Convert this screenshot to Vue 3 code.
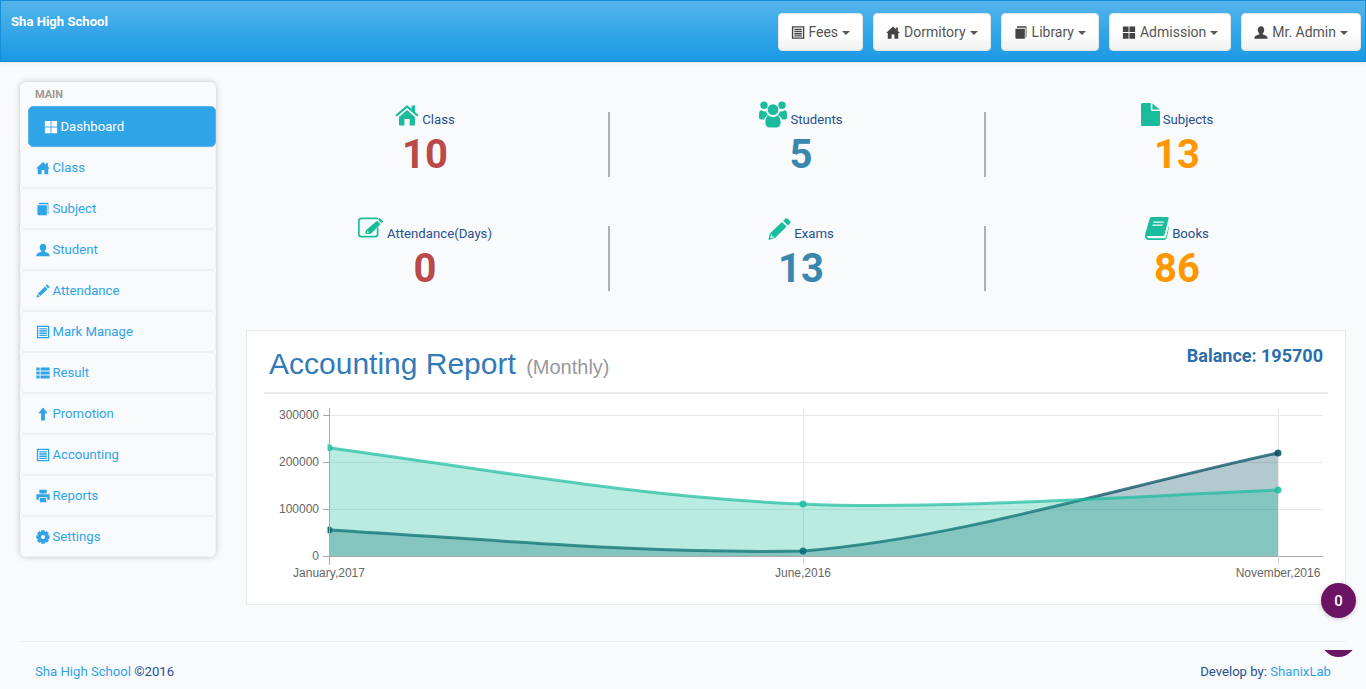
<script setup>
const paths = {
  th: 'M1 1H7.5V7.5H1Z M8.5 1H15V7.5H8.5Z M1 8.5H7.5V15H1Z M8.5 8.5H15V15H8.5Z',
  home: 'M8 1.2 L11.6 4.4 V2.2 H13.6 V6.2 L16 8.5 H14 V15 H9.6 V10.4 H6.4 V15 H2 V8.5 H0Z',
  book: 'M1.6 3.6 H12.4 V15.2 H3.2 Q1.6 15.2 1.6 13.6Z M3.4 0.8 H14.2 V13.6 H13.3 V2.7 H3.4Z',
  user: 'M8 0.8 C10.6 0.8 11.7 3 11.7 5 C11.7 7 10.6 8.5 9.9 9.2 V10 C11.2 10.8 15.6 11 15.6 15 H0.4 C0.4 11 4.8 10.8 6.1 10 V9.2 C5.4 8.5 4.3 7 4.3 5 C4.3 3 5.4 0.8 8 0.8Z',
  pencil: 'M12.7 0.4 L15.6 3.3 L13.9 5 L11 2.1Z M10.3 2.8 L13.2 5.7 L5.1 13.8 L2.2 10.9Z M1.6 11.6 L4.4 14.4 L0.4 15.6Z',
  list: 'M1 0.8H15.2V15.2H1Z M2.6 2.4V13.6H13.6V2.4Z M3.8 3.6H12.4V5.2H3.8Z M3.8 6.1H12.4V7.7H3.8Z M3.8 8.6H12.4V10.2H3.8Z M3.8 11.1H12.4V12.5H3.8Z',
  rows: 'M0.4 1.8H4.2V5.2H0.4Z M5.2 1.8H15.6V5.2H5.2Z M0.4 6.3H4.2V9.7H0.4Z M5.2 6.3H15.6V9.7H5.2Z M0.4 10.8H4.2V14.2H0.4Z M5.2 10.8H15.6V14.2H5.2Z',
  up: 'M8 0.6 L13.4 7 H10.2 V15.4 H5.8 V7 H2.6Z',
  print: 'M3.8 0.8H12.2V5.2H3.8Z M0.4 6H15.6V12.4H12.8V9.4H3.2V12.4H0.4Z M4.4 10.4H11.6V15.2H4.4Z',
  cog: gear()
}

function gear() {
  let d = ''
  const teeth = 8
  for (let i = 0; i < teeth; i++) {
    const a = (i / teeth) * Math.PI * 2
    const pts = [[-0.42, 5.6], [-0.26, 7.9], [0.26, 7.9], [0.42, 5.6]]
    const q = pts.map(([s, r]) => `${(8 + r * Math.cos(a + s)).toFixed(2)} ${(8 + r * Math.sin(a + s)).toFixed(2)}`)
    d += (i ? 'L' : 'M') + q.join('L')
  }
  d += 'Z M8 5.6 A2.4 2.4 0 1 0 8 10.4 A2.4 2.4 0 1 0 8 5.6Z'
  return d
}

const bigIcons = {
  home: { box: '0 0 24 22', d: 'M0.4 11 L12 1 L16.6 5 V1.6 H20 V8 L23.6 11 L22.2 12.6 L12 3.9 L1.8 12.6Z M4 13 L12 6.1 L20 13 V20.5 A1 1 0 0 1 19 21.5 H14.6 V15 H9.4 V21.5 H5 A1 1 0 0 1 4 20.5Z' },
  users: { box: '0 0 28 27', d: 'M5 0.6 A3.7 3.7 0 1 1 5 8 A3.7 3.7 0 1 1 5 0.6Z M23 0.6 A3.7 3.7 0 1 1 23 8 A3.7 3.7 0 1 1 23 0.6Z M14 3.2 A5.4 5.4 0 1 1 14 14 A5.4 5.4 0 1 1 14 3.2Z M0 13 C0 10.5 1 9.2 2.5 9.2 C4 10.4 5.5 10.6 7.2 10.2 C7.6 12 8.2 13.2 9.2 14.2 C7 15 5.6 16.4 5 18.5 H2 C0.8 18.5 0 17.8 0 16.5Z M28 13 C28 10.5 27 9.2 25.5 9.2 C24 10.4 22.5 10.6 20.8 10.2 C20.4 12 19.8 13.2 18.8 14.2 C21 15 22.4 16.4 23 18.5 H26 C27.2 18.5 28 17.8 28 16.5Z M6.4 21.5 C6.4 17.6 7.6 14.8 9.8 14.4 C11 15.6 12.4 16 14 16 C15.6 16 17 15.6 18.2 14.4 C20.4 14.8 21.6 17.6 21.6 21.5 C21.6 24.8 19.8 26.6 17.6 26.6 H10.4 C8.2 26.6 6.4 24.8 6.4 21.5Z' },
  file: { box: '0 0 19 23', d: 'M0 1.5 A1.5 1.5 0 0 1 1.5 0 H9.8 V6.6 A1.4 1.4 0 0 0 11.2 8 H19 V21.5 A1.5 1.5 0 0 1 17.5 23 H1.5 A1.5 1.5 0 0 1 0 21.5Z M11.4 0.4 L18.8 6.6 H11.4Z' },
  edit: { box: '0 0 26 21', d: 'M3.5 0.5 H20 V2.2 H3.5 A1.8 1.8 0 0 0 1.7 4 V17 A1.8 1.8 0 0 0 3.5 18.8 H17 A1.8 1.8 0 0 0 18.8 17 V11.5 L20.5 9.8 V17 A3.5 3.5 0 0 1 17 20.5 H3.5 A3.5 3.5 0 0 1 0 17 V4 A3.5 3.5 0 0 1 3.5 0.5Z M21.8 1 L25.4 4.4 L23.6 6.3 L20 2.8Z M19 3.8 L22.6 7.3 L12.6 17 L7.6 17 L7.6 13.6Z M9.4 13.6 L8.8 15.8 L11 15.6Z' },
  pen: { box: '0 0 23 22', d: 'M17.8 0.3 Q18.6 0 19.4 0.6 L22.2 3.3 Q23 4.2 22.3 5 L19.8 7.4 L15.2 2.8Z M14 3.9 L18.6 8.5 L7 20 L0.4 22 L1.8 15.6Z M3.2 16.2 L2.4 19.4 L3.2 20 L6 19.4 L5.8 18.6 L4 18.6 L4 16.8Z' },
  book: { box: '0 0 24 23', d: 'M6.6 0 H22.6 Q24 0 23.6 1.6 L19.6 17.5 Q19 19 17.6 19 H3.4 Q1.7 19 2.2 20.3 Q2.8 21.3 4 21.3 H19.4 Q20.6 21.3 21 20 L24 8.5 V10.5 L21.8 20.5 Q21 23 18.8 23 H3.4 Q0.8 23 0.2 20 Q-0.2 18.5 0.4 16.5 L4.6 1.8 Q5 0 6.6 0Z M8.6 4.4 L8.2 5.8 H18.4 L18.8 4.4Z M7.6 7.4 L7.2 8.8 H17.4 L17.8 7.4Z' }
}

const navs = [
  { icon: 'list', label: 'Fees' },
  { icon: 'home', label: 'Dormitory' },
  { icon: 'book', label: 'Library' },
  { icon: 'th', label: 'Admission' },
  { icon: 'user', label: 'Mr. Admin' }
]

const menu = [
  { icon: 'home', label: 'Class' },
  { icon: 'book', label: 'Subject' },
  { icon: 'user', label: 'Student' },
  { icon: 'pencil', label: 'Attendance' },
  { icon: 'list', label: 'Mark Manage' },
  { icon: 'rows', label: 'Result' },
  { icon: 'up', label: 'Promotion' },
  { icon: 'list', label: 'Accounting' },
  { icon: 'print', label: 'Reports' },
  { icon: 'cog', label: 'Settings' }
]

const stats = [
  { icon: 'home', label: 'Class', value: '10', tone: 'red' },
  { icon: 'users', label: 'Students', value: '5', tone: 'blue' },
  { icon: 'file', label: 'Subjects', value: '13', tone: 'orange' },
  { icon: 'edit', label: 'Attendance(Days)', value: '0', tone: 'red' },
  { icon: 'pen', label: 'Exams', value: '13', tone: 'blue' },
  { icon: 'book', label: 'Books', value: '86', tone: 'orange' }
]

const yOf = (v) => 556 - (v / 300000) * 141

const series = [
  {
    cls: 'expense',
    line: 'M329 530C487 539 640 554 803 551C961 538 1120 487 1278 453',
    dots: [{ x: 329, y: 530 }, { x: 803, y: 551 }, { x: 1278, y: 453 }]
  },
  {
    cls: 'income',
    line: 'M329 447.7C487 469.3 640 497.5 803 504C930 510 1120 497 1278 490',
    dots: [{ x: 329, y: 447.7 }, { x: 803, y: 504 }, { x: 1278, y: 490 }]
  }
].map((s) => ({ ...s, area: `${s.line}L1278 556L329 556Z` }))

const yTicks = [0, 100000, 200000, 300000].map((v) => ({ v, y: yOf(v) }))
const xTicks = [
  { x: 329, label: 'January,2017' },
  { x: 803, label: 'June,2016' },
  { x: 1278, label: 'November,2016' }
]
</script>

<template>
  <div class="page">
    <header class="topbar">
      <div class="brand">Sha High School</div>
      <nav class="nav">
        <button v-for="n in navs" :key="n.label" class="nav-btn" type="button">
          <svg class="nav-ic" viewBox="0 0 16 16"><path fill-rule="evenodd" :d="paths[n.icon]" /></svg>
          <span>{{ n.label }}</span>
          <i class="caret"></i>
        </button>
      </nav>
    </header>

    <main class="main">
      <aside class="sidebar">
        <div class="side-title">MAIN</div>
        <a class="side-item active">
          <svg class="side-ic" viewBox="0 0 16 16"><path :d="paths.th" /></svg>
          <span>Dashboard</span>
        </a>
        <a v-for="m in menu" :key="m.label" class="side-item">
          <svg class="side-ic" viewBox="0 0 16 16"><path fill-rule="evenodd" :d="paths[m.icon]" /></svg>
          <span>{{ m.label }}</span>
        </a>
      </aside>

      <section class="content">
        <div class="stats">
          <div v-for="(s, i) in stats" :key="s.label" class="stat" :class="{ 'has-rule': i % 3 !== 2 }">
            <div class="stat-head">
              <svg class="stat-ic" :class="'ic-' + s.icon" :viewBox="bigIcons[s.icon].box">
                <path fill-rule="evenodd" :d="bigIcons[s.icon].d" />
              </svg>
              <span class="stat-label">{{ s.label }}</span>
            </div>
            <div class="stat-value" :class="s.tone">{{ s.value }}</div>
          </div>
        </div>

        <div class="card">
          <div class="card-head">
            <h2 class="card-title">Accounting Report <small>(Monthly)</small></h2>
            <div class="balance">Balance: 195700</div>
          </div>
          <svg class="chart" viewBox="247 394 1098 210">
            <defs>
              <clipPath id="plot"><rect x="327.5" y="400" width="960" height="157" /></clipPath>
            </defs>
            <line v-for="t in yTicks.slice(1)" :key="t.v" class="grid" x1="329" x2="1323" :y1="t.y + 0.5" :y2="t.y + 0.5" />
            <line v-for="t in xTicks.slice(1)" :key="t.x" class="grid" :x1="t.x + 0.5" :x2="t.x + 0.5" y1="408" y2="556" />
            <g clip-path="url(#plot)">
              <g v-for="s in series" :key="s.cls" :class="s.cls">
                <path class="area" :d="s.area" />
                <path class="line" :d="s.line" />
                <circle v-for="d in s.dots" :key="d.x" class="dot" :cx="d.x" :cy="d.y" r="3.5" />
              </g>
            </g>
            <line class="axis" x1="329" x2="1323" y1="556.5" y2="556.5" />
            <line class="axis" x1="329.5" x2="329.5" y1="408" y2="565" />
            <line v-for="t in yTicks" :key="'t' + t.v" class="axis" x1="323" x2="329" :y1="t.y + 0.5" :y2="t.y + 0.5" />
            <line v-for="t in xTicks.slice(1)" :key="'x' + t.x" class="axis-soft" :x1="t.x + 0.5" :x2="t.x + 0.5" y1="556" y2="565" />
            <text v-for="t in yTicks" :key="'l' + t.v" class="tick" x="319" :y="t.y + 4" text-anchor="end">{{ t.v }}</text>
            <text v-for="t in xTicks" :key="'b' + t.x" class="tick" :x="t.x" y="577" text-anchor="middle">{{ t.label }}</text>
          </svg>
        </div>
      </section>
    </main>

    <footer class="footer">
      <div><a>Sha High School</a> ©2016</div>
      <div>Develop by: <a>ShanixLab</a></div>
    </footer>

    <div class="badge">0</div>
    <div class="badge-clip"><div class="badge-under"></div></div>
  </div>
</template>

<style>
html, body { margin: 0; background: #f9fafc; }
</style>

<style scoped>
.page {
  position: relative;
  width: 1366px;
  height: 689px;
  overflow: hidden;
  background: #f9fafc;
  font-family: Roboto, "Liberation Sans", sans-serif;
  font-size: 13px;
  color: #26508f;
  display: flex;
  flex-direction: column;
}
.topbar {
  height: 62px;
  box-sizing: border-box;
  border: 1px solid #1a8fd9;
  border-bottom-color: #178ad2;
  background: linear-gradient(#54b4eb, #2fa4e7 60%, #1b98e5);
  box-shadow: 0 1px 6px rgba(0, 0, 0, 0.08);
  display: flex;
  justify-content: space-between;
  flex: none;
  z-index: 1;
}
.brand {
  padding: 13px 0 0 10px;
  font-weight: 700;
  font-size: 13.1px;
  line-height: 16px;
  color: #fff;
}
.nav {
  display: flex;
  gap: 10px;
  padding: 12px 4px 0 0;
}
.nav-btn {
  height: 38px;
  box-sizing: border-box;
  padding: 0 12px;
  display: flex;
  align-items: center;
  border: 1px solid #e4e7ea;
  border-radius: 4px;
  background: linear-gradient(#fff, #fff 55%, #f0f0f0);
  font-family: inherit;
  font-size: 14px;
  color: #555;
}
.nav-btn:first-child { padding-left: 11px; }
.nav-btn:first-child .nav-ic { margin: 0 3px 0 1px; }
.nav-ic {
  width: 14px;
  height: 15px;
  margin-right: 4px;
  fill: #444;
}
.caret {
  margin-left: 4px;
  margin-top: 1px;
  border-top: 4px solid #555;
  border-left: 4px solid transparent;
  border-right: 4px solid transparent;
}
.main {
  flex: 1;
  display: flex;
  align-items: flex-start;
  min-height: 0;
}
.sidebar {
  width: 196px;
  margin: 20px 0 0 20px;
  border-radius: 6px;
  box-shadow: 0 0 6px rgba(0, 0, 0, 0.22);
  flex: none;
}
.side-title {
  height: 24px;
  box-sizing: border-box;
  padding: 6px 0 0 15px;
  font-size: 11px;
  line-height: 14px;
  font-weight: 700;
  color: #a09a94;
}
.side-item {
  height: 41px;
  box-sizing: border-box;
  display: flex;
  align-items: center;
  padding-left: 15px;
  border: 1px solid #eef0f3;
  border-radius: 5px;
  color: #2fa4e7;
  font-size: 13.15px;
}
.side-ic {
  width: 14px;
  height: 14px;
  margin-right: 2.5px;
  fill: #2fa4e7;
}
.side-item.active {
  margin-left: 8px;
  background: #2fa4e7;
  border-color: #5bb5ea;
  color: #fff;
}
.active .side-ic { fill: #fff; }
.content {
  width: 1100px;
  margin-left: 30px;
  flex: none;
}
.stats {
  margin: 37px 0 0 -13px;
  display: grid;
  grid-template-columns: repeat(3, 376px);
}
.stat {
  position: relative;
  height: 114px;
  padding-left: 8px;
  box-sizing: border-box;
  display: flex;
  flex-direction: column;
  align-items: center;
}
.has-rule::after {
  content: "";
  position: absolute;
  right: -1px;
  top: 13px;
  width: 2px;
  height: 65px;
  background: #aab2b4;
}
.stat-head {
  height: 31px;
  display: flex;
  align-items: flex-end;
}
.stat-ic { fill: #1abc9c; margin-right: 3px; }
.ic-home { width: 24px; height: 22px; margin-bottom: 4px; }
.ic-users { width: 28px; height: 27px; margin-bottom: 2px; }
.ic-file { width: 19px; height: 23px; margin-bottom: 4px; }
.ic-edit { width: 26px; height: 21px; margin-bottom: 6px; }
.ic-pen { width: 23px; height: 22px; margin-bottom: 4px; }
.ic-book { width: 24px; height: 23px; margin-bottom: 4px; }
.stat-label {
  line-height: 20px;
  font-size: 13.2px;
}
.stat-value {
  height: 46px;
  line-height: 46px;
  font-size: 40px;
  font-weight: 700;
  margin-top: 2px;
}
.red { color: #b94a48; }
.blue { color: #3a87ad; }
.orange { color: #ff9800; }
.card {
  height: 275px;
  margin-top: 3px;
  box-sizing: border-box;
  border: 1px solid #e8ebef;
  background: #fff;
}
.card-head {
  height: 63px;
  box-sizing: border-box;
  margin: 0 17px;
  padding: 0 5px;
  border-bottom: 2px solid #e8ebef;
  display: flex;
  justify-content: space-between;
}
.card-title {
  margin: 0;
  font-family: "Liberation Sans", Arial, sans-serif;
  font-size: 30px;
  font-weight: 400;
  line-height: 33px;
  padding-top: 16px;
  color: #337ab7;
}
.card-title small {
  font-size: 20px;
  color: #999;
  margin-left: 2px;
}
.balance {
  padding-top: 14px;
  font-size: 18px;
  line-height: 22px;
  font-weight: 700;
  color: #2a6ead;
}
.chart {
  display: block;
  width: 1098px;
  height: 210px;
}
.grid { stroke: #e6e8ec; stroke-width: 1; }
.axis { stroke: #a8a8a8; stroke-width: 1; }
.axis-soft { stroke: #d8d8d8; stroke-width: 1; }
.area { stroke: none; }
.line { fill: none; stroke-width: 3; }
.income .area { fill: rgba(26, 188, 156, 0.3); }
.income .line { stroke: rgba(26, 188, 156, 0.7); }
.income .dot { fill: rgba(26, 188, 156, 0.85); }
.expense .area { fill: rgba(0, 75, 95, 0.3); }
.expense .line { stroke: rgba(0, 75, 95, 0.72); }
.expense .dot { fill: rgba(0, 75, 95, 0.85); }
.tick {
  font-family: "Liberation Sans", Arial, sans-serif;
  font-size: 12px;
  fill: #666;
}
.footer {
  height: 48px;
  flex: none;
  box-sizing: border-box;
  margin: 0 20px;
  padding: 21px 15px 0;
  border-top: 1px solid #eeeff2;
  display: flex;
  justify-content: space-between;
  line-height: 18px;
  font-size: 13.15px;
}
.footer a { color: #2fa4e7; }
.badge {
  position: absolute;
  left: 1321px;
  top: 583px;
  width: 35px;
  height: 35px;
  border-radius: 50%;
  background: #6b1464;
  color: #fff;
  font-weight: 500;
  font-size: 15px;
  line-height: 36px;
  text-align: center;
  box-shadow: 0 1px 5px rgba(0, 0, 0, 0.2);
}
.badge-clip {
  position: absolute;
  left: 1316px;
  top: 650px;
  width: 45px;
  height: 10px;
  overflow: hidden;
}
.badge-under {
  position: absolute;
  left: 5px;
  top: -28px;
  width: 35px;
  height: 35px;
  border-radius: 50%;
  background: #6b1464;
}
</style>
